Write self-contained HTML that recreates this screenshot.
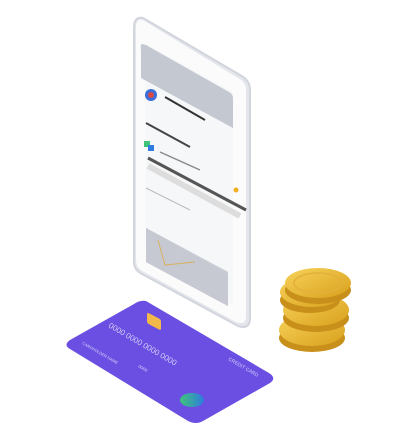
<!DOCTYPE html>
<html><head><style>html,body{margin:0;padding:0;background:#fff;width:414px;height:436px;overflow:hidden}</style></head>
<body>
<svg width="414" height="436" viewBox="0 0 414 436" xmlns="http://www.w3.org/2000/svg" font-family="Liberation Sans, sans-serif">
<defs>
<linearGradient id="gold" x1="0" y1="0" x2="1" y2="1"><stop offset="0" stop-color="#f7d25a"/><stop offset="1" stop-color="#d9a01c"/></linearGradient>
<linearGradient id="logo" x1="0" x2="1"><stop offset="0" stop-color="#3fc47a"/><stop offset="1" stop-color="#2f7be0"/></linearGradient>
</defs>
<!-- phone shadow side -->
<path d="M143 18 Q134 16 134 28 L134 262 Q134 270 142 274 L238 326 Q250 330 250 318 L250 90 Q250 80 240 75 Z" fill="#e4e6ec" stroke="#d2d5dc" stroke-width="2"/>
<path d="M143 20 Q136 18 136 28 L136 260 Q136 268 144 272 L236 322 Q246 326 246 316 L246 90 Q246 82 238 78 Z" fill="#fbfbfc"/>
<!-- screen -->
<path d="M145 44 L233 92 L233 305 L146 258 Z" fill="#f6f7f9"/>
<path d="M142 44 Q140 44 141 50 L141 70 L233 120 L233 98 Q233 94 229 92 L146 45 Z" fill="#c4c8d1"/>
<path d="M141 50 L233 100 L233 128 L141 78 Z" fill="#c4c8d1"/>
<!-- list items -->
<circle cx="151" cy="95" r="6" fill="#3b6fd8"/><circle cx="151" cy="95" r="3" fill="#d84a4a"/>
<path d="M165 97 L205 120" stroke="#333" stroke-width="2"/>
<path d="M146 123 L190 147" stroke="#444" stroke-width="2"/>
<rect x="144" y="141" width="6" height="6" fill="#3fc47a"/><rect x="148" y="145" width="6" height="6" fill="#2f7be0"/>
<path d="M160 152 L200 170" stroke="#888" stroke-width="1.5"/>
<path d="M148 158 L246 210" stroke="#555" stroke-width="3"/>
<path d="M148 166 L240 216" stroke="#ddd" stroke-width="6"/>
<path d="M146 188 L190 210" stroke="#bbb" stroke-width="1"/>
<circle cx="236" cy="190" r="2.5" fill="#f0b020"/>
<!-- chart -->
<path d="M146 228 L228 272 L228 306 L146 262 Z" fill="#c9ccd4"/>
<path d="M146 228 L228 272 L228 306 L146 262 Z" fill="#c9ccd4" transform="translate(0,0)"/>
<path d="M146 228 L228 275 L228 306 L146 262 Z" fill="#c6c9d2"/>
<path d="M158 240 L165 265 L195 262" stroke="#d8b060" stroke-width="1" fill="none"/>
<!-- coins -->
<g>
<ellipse cx="312" cy="338" rx="33" ry="14" fill="#c8901a"/>
<ellipse cx="312" cy="330" rx="33" ry="16" fill="url(#gold)"/>
<ellipse cx="316" cy="318" rx="33" ry="14" fill="#c8901a"/>
<ellipse cx="316" cy="310" rx="33" ry="16" fill="url(#gold)"/>
<ellipse cx="310" cy="300" rx="30" ry="13" fill="#c8901a"/>
<ellipse cx="312" cy="292" rx="32" ry="15" fill="url(#gold)"/>
<ellipse cx="318" cy="290" rx="33" ry="14" fill="#c8901a"/>
<ellipse cx="318" cy="283" rx="33" ry="15" fill="url(#gold)"/>
<ellipse cx="318" cy="283" rx="24" ry="10" fill="none" stroke="#e3b03a" stroke-width="1.5"/>
</g>
<!-- card -->
<path d="M146 301 Q140 300 134 304 L70 340 Q63 345 70 349 L188 421 Q196 425 203 421 L270 383 Q277 378 269 373 Z" fill="#6a4fe2"/>
<rect x="147" y="314" width="14" height="11" rx="2" fill="#f2b94a" transform="skewY(28) translate(0,-80)"/>
<g fill="#d6d0fa" font-size="8">
<text transform="matrix(0.86 0.5 -0.5 0.86 108 327)">0000 0000 0000 0000</text>
<text transform="matrix(0.86 0.5 -0.5 0.86 82 344)" font-size="4">CARDHOLDER NAME</text>
<text transform="matrix(0.86 0.5 -0.5 0.86 138 367)" font-size="4">00/00</text>
<text transform="matrix(0.86 0.5 -0.5 0.86 228 360)" font-size="5">CREDIT CARD</text>
</g>
<ellipse cx="192" cy="400" rx="12" ry="7" fill="url(#logo)"/>
</svg>
</body></html>
